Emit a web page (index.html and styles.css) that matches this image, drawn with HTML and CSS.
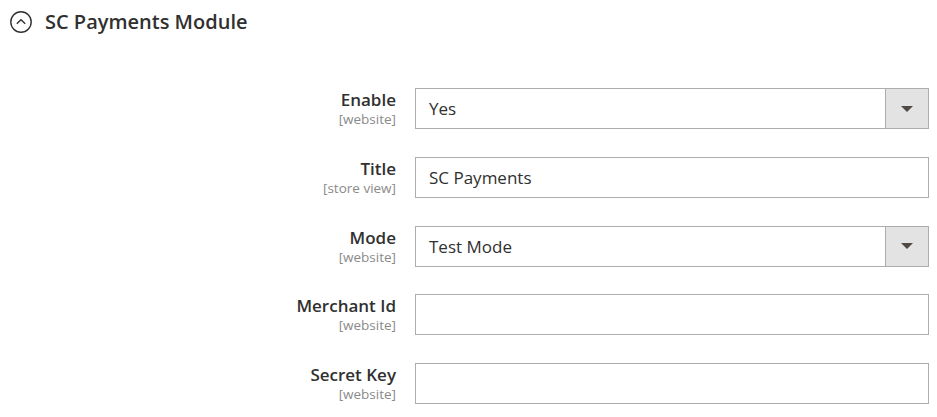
FILE: index.html
```html
<!DOCTYPE html>
<html>
<head>
<meta charset="utf-8">
<link rel="stylesheet" href="styles.css">
</head>
<body>
<div class="section">
  <div class="section-head">
    <span class="toggle"><svg width="22" height="22" viewBox="0 0 22 22"><circle cx="11" cy="11" r="10.2" fill="none" stroke="#303030" stroke-width="1.4"/><path d="M6.8 12.8 L11 8.8 L15.2 12.8" fill="none" stroke="#303030" stroke-width="1.4"/></svg></span>
    <h2 class="section-title">SC Payments Module</h2>
  </div>
  <div class="form">
    <div class="row">
      <div class="label"><span class="name">Enable</span><span class="scope">[website]</span></div>
      <div class="control select"><span class="value">Yes</span><span class="arrow"></span></div>
    </div>
    <div class="row">
      <div class="label"><span class="name">Title</span><span class="scope">[store view]</span></div>
      <div class="control"><span class="value">SC Payments</span></div>
    </div>
    <div class="row">
      <div class="label"><span class="name">Mode</span><span class="scope">[website]</span></div>
      <div class="control select"><span class="value">Test Mode</span><span class="arrow"></span></div>
    </div>
    <div class="row">
      <div class="label"><span class="name">Merchant Id</span><span class="scope">[website]</span></div>
      <div class="control"></div>
    </div>
    <div class="row">
      <div class="label"><span class="name">Secret Key</span><span class="scope">[website]</span></div>
      <div class="control"></div>
    </div>
  </div>
</div>
</body>
</html>
```
FILE: styles.css
```css
html, body { margin: 0; padding: 0; background: #fff; }
body { font-family: "Open Sans", sans-serif; color: #303030; }
.section { padding: 0 8px 0 10px; }
.section-head { display: flex; align-items: center; height: 44px; gap: 13px; }
.toggle { display: flex; width: 22px; height: 22px; }
.section-title { margin: 0; font-size: 20px; font-weight: 600; color: #303030; line-height: 1; }
.form { padding-top: 44px; display: flex; flex-direction: column; gap: 27.75px; }
.row { display: flex; align-items: flex-start; }
.label { width: 386px; display: flex; flex-direction: column; align-items: flex-end; padding-right: 19px; box-sizing: content-box; }
.name { font-size: 17px; font-weight: 600; line-height: 22px; padding-top: 1px; }
.scope { font-size: 13.5px; color: #8a8a8a; line-height: 16px; }
.control { width: 514px; height: 41px; box-sizing: border-box; border: 1px solid #adadad; display: flex; align-items: center; position: relative; }
.value { font-size: 17px; padding-left: 13px; line-height: 1; }
.select .arrow { position: absolute; right: 0; top: 0; bottom: 0; width: 42px; background: #e3e3e3; border-left: 1px solid #adadad; }
.select .arrow::after { content: ""; position: absolute; left: 50%; top: 50%; margin-left: -6px; margin-top: -3px; border-left: 6px solid transparent; border-right: 6px solid transparent; border-top: 6px solid #514943; }
```
